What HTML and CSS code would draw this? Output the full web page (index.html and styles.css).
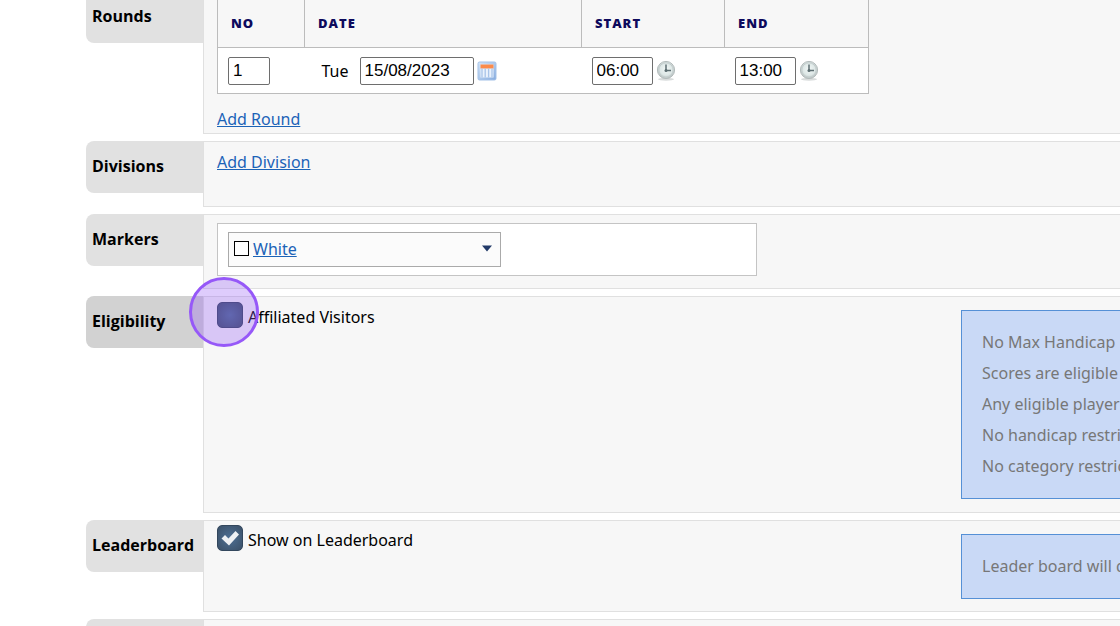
FILE: index.html
```html
<!DOCTYPE html>
<html lang="en">
<head>
<meta charset="utf-8">
<title>Competition setup</title>
<link rel="stylesheet" href="styles.css">
</head>
<body>
<svg class="defs" aria-hidden="true">
  <defs>
    <radialGradient id="face" cx="50%" cy="45%" r="55%">
      <stop offset="0" stop-color="#f2f8f7"/>
      <stop offset="0.65" stop-color="#dde7e6"/>
      <stop offset="1" stop-color="#b5bdbd"/>
    </radialGradient>
    <linearGradient id="frame" x1="0" y1="0" x2="1" y2="1">
      <stop offset="0" stop-color="#d3e5f9"/>
      <stop offset="1" stop-color="#86abde"/>
    </linearGradient>
    <symbol id="clock" viewBox="0 0 20 22">
      <ellipse cx="10" cy="19.2" rx="8" ry="1.5" fill="#d9dcdc"/>
      <circle cx="10" cy="10" r="8.6" fill="url(#face)" stroke="#b4bcbc" stroke-width="1"/>
      <circle cx="10" cy="10" r="7.2" fill="none" stroke="#c3cdcd" stroke-width="1"/>
      <path d="M10 4.5V10.5M9 10.5H15" fill="none" stroke="#5d6e72" stroke-width="1.5"/>
      <circle cx="10" cy="10.5" r="1.5" fill="#5d6e72"/>
    </symbol>
    <symbol id="calendar" viewBox="0 0 20 20">
      <rect x="1" y="1" width="18" height="18" rx="1.5" fill="url(#frame)" stroke="#a3c1e8" stroke-width="1"/>
      <rect x="3.5" y="3.5" width="13" height="13" fill="#eaf2fc"/>
      <rect x="3.5" y="3.5" width="13" height="4" fill="#fb8b4b"/>
      <path d="M5 7.5V16.5M8.2 7.5V16.5M11.6 7.5V16.5M15 7.5V16.5" stroke="#a9c4e8" stroke-width="1.3"/>
    </symbol>
  </defs>
</svg>
<main class="form">
  <section class="row rounds">
    <h2 class="tab">Rounds</h2>
    <div class="panel">
      <div class="content">
        <table class="schedule">
          <thead>
            <tr><th class="col-no">No</th><th class="col-date">Date</th><th class="col-start">Start</th><th class="col-end">End</th></tr>
          </thead>
          <tbody>
            <tr>
              <td><input class="field number" type="text" value="1" aria-label="Round number"></td>
              <td><div class="cell date-cell"><label for="date">Tue</label><input class="field date" id="date" type="text" value="15/08/2023"><button class="icon" type="button" aria-label="Pick date"><svg width="20" height="20"><use href="#calendar"/></svg></button></div></td>
              <td><div class="cell"><input class="field time" type="text" value="06:00" aria-label="Start"><button class="icon" type="button" aria-label="Pick start time"><svg width="20" height="22"><use href="#clock"/></svg></button></div></td>
              <td><div class="cell"><input class="field time" type="text" value="13:00" aria-label="End"><button class="icon" type="button" aria-label="Pick end time"><svg width="20" height="22"><use href="#clock"/></svg></button></div></td>
            </tr>
          </tbody>
        </table>
        <a class="link add" href="#">Add Round</a>
      </div>
    </div>
  </section>

  <section class="row divisions">
    <h2 class="tab">Divisions</h2>
    <div class="panel">
      <div class="content"><a class="link" href="#">Add Division</a></div>
    </div>
  </section>

  <section class="row markers">
    <h2 class="tab">Markers</h2>
    <div class="panel">
      <div class="content">
        <div class="marker-box">
          <button class="picker" type="button" aria-haspopup="listbox">
            <span class="swatch"></span><span class="link">White</span>
            <svg class="caret" width="12" height="7" viewBox="0 0 12 7"><path d="M1 0.5H11L6 6.5Z" fill="#223a68"/></svg>
          </button>
        </div>
      </div>
    </div>
  </section>

  <section class="row eligibility">
    <h2 class="tab tab-active">Eligibility</h2>
    <div class="panel">
      <div class="content">
        <label class="option"><span class="check"><input class="box" type="checkbox"></span><span>Affiliated Visitors</span></label>
      </div>
      <aside class="note">
        <p>No Max Handicap</p>
        <p>Scores are eligible</p>
        <p>Any eligible player</p>
        <p>No handicap restrictions</p>
        <p>No category restrictions</p>
      </aside>
    </div>
    <span class="pointer"></span>
  </section>

  <section class="row leaderboard">
    <h2 class="tab">Leaderboard</h2>
    <div class="panel">
      <div class="content">
        <label class="option"><span class="check"><input class="box" type="checkbox" checked><svg class="tick" viewBox="0 0 26 26"><path d="M4.5 13.5L8 10L11.5 13.5L18.5 6L22 9.5L12 20.5Z" fill="#edf0f3"/></svg></span><span>Show on Leaderboard</span></label>
      </div>
      <aside class="note"><p>Leader board will display</p></aside>
    </div>
  </section>

  <section class="row">
    <div class="tab"></div>
    <div class="panel"></div>
  </section>
</main>
</body>
</html>
```
FILE: styles.css
```css
* { box-sizing: border-box; }

html { height: 100%; overflow: hidden; }

body {
  height: 100%;
  margin: 0;
  overflow: hidden;
  background: #fff;
  color: #000;
  font: 16px/22px "Noto Sans", "Open Sans", sans-serif;
}

.defs { position: absolute; width: 0; height: 0; }

/* the form is scrolled slightly past its first row */
.form {
  display: flex;
  flex-direction: column;
  gap: 7px;
  margin-top: -9px;
  padding-left: 86px;
}

.row {
  position: relative;
  display: grid;
  grid-template-columns: 117px minmax(0, 1fr);
  align-items: stretch;
  min-height: 66px;
}

.tab {
  align-self: start;
  height: 52px;
  margin: 0;
  padding: 14px 6px;
  border-radius: 8px 0 0 8px;
  background: #e1e1e1;
  font-family: "Open Sans", "Noto Sans", sans-serif;
  font-size: 16px;
  font-weight: 700;
  line-height: 22px;
}

.tab-active { background: #d2d2d2; }

.panel {
  display: flex;
  border: 1px solid #e0e0e0;
  border-right: 0;
  background: #f7f7f7;
}

.content { flex: 1; padding: 8px 0 0 13px; }

.rounds { min-height: 143px; }
.rounds .content { padding-top: 7px; }
.divisions .content { padding-top: 9px; }
.markers { min-height: 75px; }
.eligibility { min-height: 217px; }
.leaderboard { min-height: 92px; }
.eligibility .content { padding-top: 5px; }
.leaderboard .content { padding-top: 4px; }

.link { color: #1c63b7; text-decoration: underline; }
.add { display: inline-block; margin-top: 14px; }

.schedule {
  width: 652px;
  border: 1px solid #bcbcbc;
  border-collapse: collapse;
  table-layout: fixed;
}

.schedule th, .schedule td {
  padding: 0 10px;
  text-align: left;
}

.schedule th {
  height: 48px;
  padding: 0 13px 2px;
  border: 1px solid #bcbcbc;
  background: #f7f7f7;
  color: #0d0a5c;
  font-family: "Open Sans", "Noto Sans", sans-serif;
  font-size: 13px;
  font-weight: 800;
  letter-spacing: 1px;
  text-transform: uppercase;
}

.schedule td { height: 46px; background: #fff; }

.col-no { width: 87px; }
.col-date { width: 277px; }
.col-start { width: 143px; }
.col-end { width: 144px; }

.cell { display: flex; align-items: center; gap: 3px; }
.date-cell { padding-left: 7px; }
.date-cell label { width: 35px; }

.field {
  height: 28px;
  margin: 0;
  padding: 0 4px;
  border: 1px solid #6e6e6e;
  border-radius: 2px;
  background: #fff;
  color: #000;
  font: 17px "Liberation Sans", Arial, sans-serif;
}

.number { display: block; width: 42px; }
.date { width: 114px; }
.time { width: 61px; }

.icon {
  display: flex;
  padding: 0;
  border: 0;
  background: none;
}

.marker-box {
  width: 540px;
  padding: 8px 10px;
  border: 1px solid #c4c4c4;
  background: #fff;
}

.picker {
  display: flex;
  align-items: center;
  gap: 4px;
  width: 273px;
  height: 35px;
  padding: 0 7px 2px 5px;
  border: 1px solid #aaa;
  background: #fbfbfb;
  font: inherit;
}

.swatch { width: 15px; height: 15px; border: 1px solid #000; background: #fff; }
.caret { margin-left: auto; }

.option { display: inline-flex; align-items: center; gap: 5px; }
.option > span:last-child { padding-top: 4px; }

.check { position: relative; display: flex; }

.box {
  width: 26px;
  height: 26px;
  margin: 0;
  appearance: none;
  border: 1px solid #33475d;
  border-radius: 5px;
  background: radial-gradient(#4d6f94, #3b5067);
}

.tick { position: absolute; inset: 0; }

.note {
  flex: 0 0 159px;
  align-self: start;
  margin-top: 13px;
  padding: 16px 0 16px 20px;
  overflow: hidden;
  border: 1px solid #5590d6;
  border-right: 0;
  background: #c9d9f6;
  color: #777;
  line-height: 31px;
  white-space: nowrap;
}

.note p { margin: 0; }

/* click highlight over the check box */
.pointer {
  position: absolute;
  top: -19px;
  left: 103px;
  width: 70px;
  height: 70px;
  border: 3px solid #9658f8;
  border-radius: 50%;
  background: rgba(145, 85, 245, 0.3);
  pointer-events: none;
}
```
